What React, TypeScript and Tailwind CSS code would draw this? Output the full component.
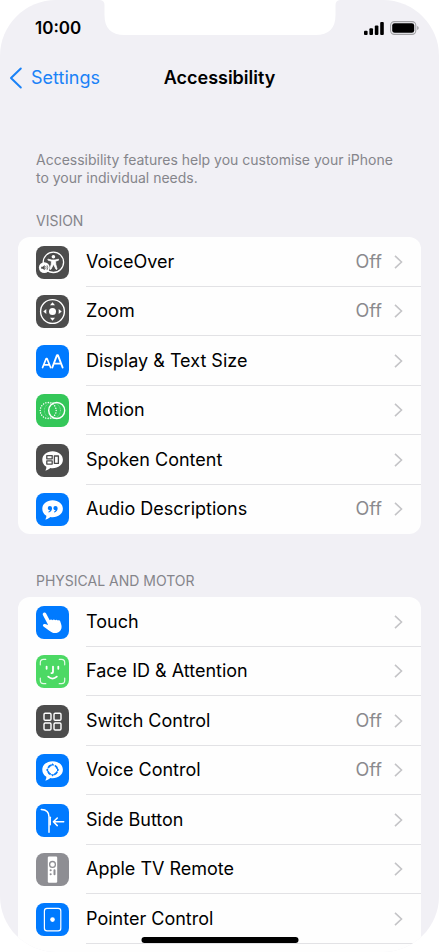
import React from 'react';

interface IconProps {
    children: React.ReactNode;
}

interface SettingItem {
    name: string;
    tile: string;
    icon: React.ReactNode;
    value?: string;
}

interface SettingGroupProps {
    title: string;
    items: SettingItem[];
    continues?: boolean;
}

const Icon: React.FC<IconProps> = ({ children }) => (
    <svg viewBox="0 0 33 33" className="h-full w-full" fill="none" stroke="white" strokeLinecap="round" strokeLinejoin="round" aria-hidden="true">
        {children}
    </svg>
);

const VoiceOverIcon = () => (
    <Icon>
        <circle cx="17.4" cy="16.3" r="10.2" strokeWidth="1.3" />
        <circle cx="17.4" cy="10.7" r="1.8" fill="white" stroke="none" />
        <path d="M12.3 13.2l3.5.8h3.2l3.5-.8v1l-3 1.1.3 3.2 1.3 4.6-1 .3-2.6-5.2-2.6 5.2-1-.3 1.3-4.6.3-3.2-3.2-1.1z" fill="white" strokeWidth=".8" />
        <circle cx="8.3" cy="21.6" r="5.4" fill="white" stroke="none" />
        <path d="M5.2 20.7h1.5l2-1.6v5.2l-2-1.6H5.2z" fill="#4c4c4c" stroke="none" />
        <path d="M9.8 20.4q.8 1.2 0 2.4M11.2 19.6q1.3 2.1 0 4.1" stroke="#4c4c4c" strokeWidth=".7" />
    </Icon>
);

const ZoomIcon = () => (
    <Icon>
        <circle cx="16.5" cy="16.5" r="11.9" strokeWidth="1.4" />
        <circle cx="16.5" cy="16.5" r="3.5" fill="white" stroke="none" />
        <path d="M16.5 7.3l2.5 3h-5zM16.5 25.7l-2.5-3h5zM7.3 16.5l3-2.5v5zM25.7 16.5l-3 2.5v-5z" fill="white" stroke="none" />
    </Icon>
);

const TextSizeIcon = () => (
    <Icon>
        <path d="M6.6 22.5l3.6-9h.8l3.6 9M7.8 19.8h5.6" strokeWidth="1.7" />
        <path d="M16.3 22.5l4.7-12.400h.9l4.7 12.400M17.900 18.600h7.100" strokeWidth="1.900" />
    </Icon>
);

const MotionIcon = () => (
    <Icon>
        <circle cx="12.2" cy="16.5" r="8" strokeWidth="1.4" strokeDasharray="0.1 2.4" />
        <circle cx="16.4" cy="16.5" r="8" strokeWidth=".8" strokeDasharray="0.1 1.4" opacity=".5" />
        <circle cx="20.7" cy="16.5" r="8" strokeWidth="1.4" />
    </Icon>
);

// Shared by every icon that sits inside a speech bubble
const Bubble = () => (
    <path d="M16.6 7.2c5.800 0 10.300 3.600 10.300 8.500s-4.500 8.500-10.300 8.500c-.8 0-1.500 0-2.200-.2-1.200 1.200-3 2.300-5.200 2.500.9-1 1.300-2.300 1.100-3.700-2.500-1.600-4-4.100-4-7.100 0-4.900 4.500-8.500 10.300-8.500z" fill="white" stroke="none" />
);

const SpokenContentIcon = () => (
    <Icon>
        <Bubble />
        <path d="M10.8 11.6h5.400v3.200h-5.400zM10.800 16.900h5.400v3.200h-5.400zM18.400 12h4v7.400h-4z" stroke="#4c4c4c" strokeWidth="1.300" />
    </Icon>
);

const AudioDescriptionsIcon = () => (
    <Icon>
        <Bubble />
        <path d="M13.8 13a2.200 2.200 0 0 1 2.200 2.400c0 2-1.300 3.600-3.400 4.100l-.3-.8c1-.4 1.600-.9 1.700-1.500a2.100 2.100 0 1 1-.2-4.200zM19.400 13a2.200 2.200 0 0 1 2.200 2.400c0 2-1.300 3.600-3.400 4.100l-.3-.8c1-.4 1.600-.9 1.700-1.500a2.100 2.100 0 1 1-.2-4.200z" fill="#007aff" stroke="none" />
    </Icon>
);

const TouchIcon = () => (
    <Icon>
        <path d="M7.600 6.800c1-.6 2-.1 2.500.8l3.600 6.700c.6-1 2-1 2.700-.1.6-1 2.200-1 2.800 0 .7-.8 2-.7 2.600.3.900-.6 2.100-.2 2.500.9l1 3.300c1 3.400-.6 6.600-3.400 7.800-3 1.200-5.800.6-8.200-1.400l-6.200-4.600c-1.400-1.100-.2-2.900 1.500-2.400l3.200.9L7 9.200c-.5-.9-.2-1.900.6-2.400z" fill="white" stroke="none" />
    </Icon>
);

const FaceIdIcon = () => (
    <Icon>
        <path d="M4.3 9.800V7.400q0-3.100 3.100-3.100h2.400M23.200 4.300h2.400q3.100 0 3.100 3.100v2.400M28.700 23.200v2.400q0 3.100-3.100 3.100h-2.400M9.800 28.700H7.400q-3.100 0-3.100-3.100v-2.400" strokeWidth="1.200" opacity=".85" />
        <path d="M10.600 11.600v2.200M22.300 11.600v2.200M17 11.600v5.500q0 1-1 1h-.6M12.200 21.700q4.300 3.800 8.600 0" strokeWidth="1.800" />
    </Icon>
);

const SwitchControlIcon = () => (
    <Icon>
        <rect x="8" y="8.300" width="7" height="7" rx="1.200" strokeWidth="1.400" />
        <rect x="18" y="8.300" width="7" height="7" rx="1.200" strokeWidth="1.400" />
        <rect x="8" y="18" width="7" height="7" rx="1.200" strokeWidth="1.400" />
        <rect x="18" y="18" width="7" height="7" rx="1.200" strokeWidth="1.400" />
    </Icon>
);

const VoiceControlIcon = () => (
    <Icon>
        <Bubble />
        <circle cx="16.600" cy="15.900" r="4.900" stroke="#007aff" strokeWidth="1.800" strokeLinecap="butt" strokeDasharray="4.100 3.597" strokeDashoffset="-1.800" />
        <path d="M16.600 9.200l1.900 2.300h-3.800zM16.600 22.600l-1.900-2.300h3.800zM9.900 15.900l2.300-1.900v3.800zM23.300 15.900l-2.300 1.900v-3.800z" fill="#007aff" stroke="none" />
    </Icon>
);

const SideButtonIcon = () => (
    <Icon>
        <path d="M5.300 5.500c5.200.2 7.700 2.700 7.700 7.200v15.500" strokeWidth="1.500" />
        <path d="M14.200 13.300v7.500" strokeWidth="1.500" />
        <path d="M27.700 17.800H18M21.300 14l-3.900 3.800 3.900 3.800" strokeWidth="1.500" />
    </Icon>
);

const RemoteIcon = () => (
    <Icon>
        <rect x="11.800" y="3.500" width="9.400" height="26.200" rx="1.200" fill="white" stroke="none" />
        <circle cx="16.500" cy="11.400" r="2.900" stroke="#8e8e93" strokeWidth="1.300" />
        <path d="M14.600 17.300h.1M14.600 21.200h.1M18.500 17.300v3.900" stroke="#8e8e93" strokeWidth="2" />
    </Icon>
);

const PointerIcon = () => (
    <Icon>
        <rect x="8.400" y="5.300" width="16.400" height="22.600" rx="2.600" strokeWidth="1.200" />
        <circle cx="16.500" cy="16.600" r="2.300" fill="white" stroke="none" />
    </Icon>
);

const visionItems: SettingItem[] = [
    { name: 'VoiceOver', tile: 'bg-[#4c4c4c]', icon: <VoiceOverIcon />, value: 'Off' },
    { name: 'Zoom', tile: 'bg-[#4c4c4c]', icon: <ZoomIcon />, value: 'Off' },
    { name: 'Display & Text Size', tile: 'bg-[#007aff]', icon: <TextSizeIcon /> },
    { name: 'Motion', tile: 'bg-[#34c759]', icon: <MotionIcon /> },
    { name: 'Spoken Content', tile: 'bg-[#4c4c4c]', icon: <SpokenContentIcon /> },
    { name: 'Audio Descriptions', tile: 'bg-[#007aff]', icon: <AudioDescriptionsIcon />, value: 'Off' },
];

const motorItems: SettingItem[] = [
    { name: 'Touch', tile: 'bg-[#007aff]', icon: <TouchIcon /> },
    { name: 'Face ID & Attention', tile: 'bg-[#4cd964]', icon: <FaceIdIcon /> },
    { name: 'Switch Control', tile: 'bg-[#4c4c4c]', icon: <SwitchControlIcon />, value: 'Off' },
    { name: 'Voice Control', tile: 'bg-[#007aff]', icon: <VoiceControlIcon />, value: 'Off' },
    { name: 'Side Button', tile: 'bg-[#007aff]', icon: <SideButtonIcon /> },
    { name: 'Apple TV Remote', tile: 'bg-[#8e8e93]', icon: <RemoteIcon /> },
    { name: 'Pointer Control', tile: 'bg-[#007aff]', icon: <PointerIcon /> },
];

const SettingGroup: React.FC<SettingGroupProps> = ({ title, items, continues }) => (
    <section>
        <h2 className="px-[18px] text-sm leading-5 text-[#85858b] uppercase">{title}</h2>
        <ul className={`mt-[6px] overflow-hidden rounded-xl bg-[#fefefe] ${continues ? 'pb-5' : ''}`}>
            {items.map((item, index) => (
                <li key={item.name} className="odd:h-[50px] even:h-[49px]">
                    <button type="button" className="flex h-full w-full items-stretch pl-[18px] text-left">
                        <span className={`mr-[17px] h-[33px] w-[33px] shrink-0 self-center overflow-hidden rounded-lg ${item.tile}`}>{item.icon}</span>
                        <span className={`flex flex-1 items-center border-b pr-[18px] ${continues || index < items.length - 1 ? 'border-[#e2e2e5]' : 'border-transparent'}`}>
                            <span className="flex-1 text-lg text-black">{item.name}</span>
                            {item.value && <span className="mr-3 text-lg text-[#8a8a8e]">{item.value}</span>}
                            <svg viewBox="0 0 9 14" className="h-3.5 w-[9px]" fill="none" stroke="#c4c4c7" strokeWidth="1.600" aria-hidden="true">
                                <path d="M1 .8L7.500 7 1 13.200" />
                            </svg>
                        </span>
                    </button>
                </li>
            ))}
        </ul>
    </section>
);

const StatusBar = () => (
    <div className="flex h-14 items-center justify-between pr-5 pl-[35px]">
        <span className="pt-0.5 text-[17px] font-semibold">10:00</span>
        <div className="flex items-center gap-[6px]">
            <svg viewBox="0 0 20 13" className="h-[13px] w-5" aria-label="Signal">
                <rect x="0" y="8.700" width="3.600" height="4.300" rx="1" />
                <rect x="5.400" y="6.300" width="3.600" height="6.700" rx="1" />
                <rect x="10.800" y="3.400" width="3.600" height="9.600" rx="1" />
                <rect x="16.200" y="0" width="3.600" height="13" rx="1" />
            </svg>
            <svg viewBox="0 0 29 14" className="h-3.5 w-[29px]" aria-label="Battery">
                <rect x=".6" y=".6" width="25.200" height="12.800" rx="3.800" fill="none" stroke="#a0a0a3" strokeWidth="1.100" />
                <rect x="2.200" y="2.200" width="22" height="9.600" rx="2.400" />
                <path d="M27.200 4.900q1.500.5 1.500 2.100t-1.500 2.100z" fill="#a0a0a3" />
            </svg>
        </div>
    </div>
);

const App: React.FC = () => {
    return (
        <div className="min-h-screen bg-white font-['Inter',sans-serif] text-black">
            <div className="relative h-screen overflow-hidden rounded-[56px] bg-[#f1f0f5]">
                {/* Notch */}
                <svg viewBox="0 0 240 35" className="absolute top-0 left-1/2 h-[35px] w-60 -translate-x-1/2" fill="white" aria-hidden="true">
                    <path d="M0 0q4.500.5 4.500 5v10q0 20 20 20h191q20 0 20-20V5q0-4.500 4.500-5z" />
                </svg>

                <StatusBar />

                <header className="grid grid-cols-[1fr_auto_1fr] items-center px-[9px] pt-2">
                    <a href="#settings" className="flex items-center gap-2 text-lg text-[#1a82f7]">
                        <svg viewBox="0 0 14 22" className="h-[22px] w-3.5" fill="none" stroke="currentColor" strokeWidth="2" strokeLinecap="round" strokeLinejoin="round" aria-hidden="true">
                            <path d="M11.800 1.500L2 11l9.800 9.500" />
                        </svg>
                        Settings
                    </a>
                    <h1 className="text-lg font-semibold">Accessibility</h1>
                </header>

                <main className="px-[18px] pt-[59px]">
                    <p className="px-[18px] text-sm leading-[18px] text-[#85858b]">
                        Accessibility features help you customise your iPhone to your individual needs.
                    </p>
                    <div className="mt-6 flex flex-col gap-[37px]">
                        <SettingGroup title="Vision" items={visionItems} />
                        <SettingGroup title="Physical and Motor" items={motorItems} continues />
                    </div>
                </main>

                {/* Home indicator */}
                <div className="absolute bottom-[9px] left-1/2 h-[6px] w-[157px] -translate-x-1/2 rounded-full bg-black"></div>
            </div>
        </div>
    );
};

export default App;
